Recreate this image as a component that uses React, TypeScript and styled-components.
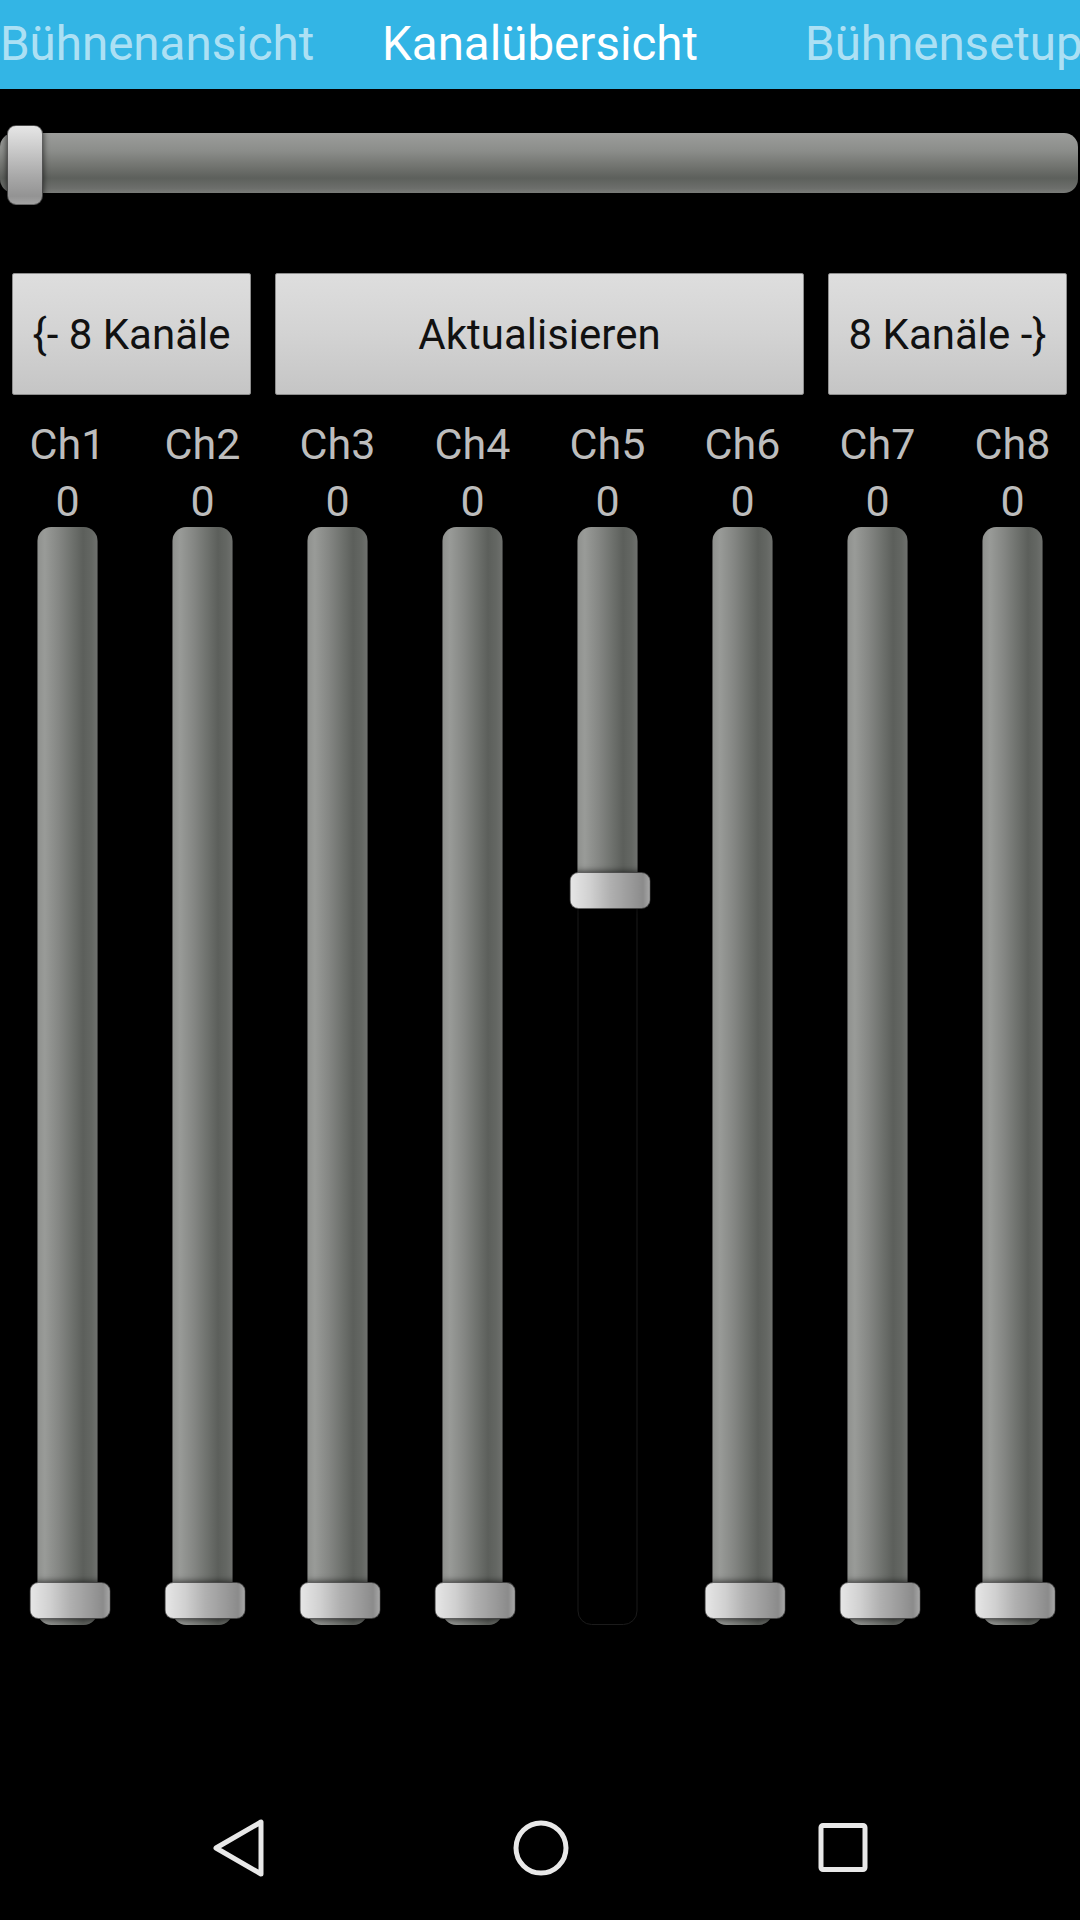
import React from "react";
import styled, { createGlobalStyle } from "styled-components";

const Global = createGlobalStyle`
  html, body { margin: 0; padding: 0; background: #000; }
  body { font-family: Roboto, "Noto Sans", "Liberation Sans", sans-serif; }
  * { box-sizing: border-box; }
`;

const Screen = styled.div`
  width: 1080px;
  height: 1920px;
  background: #000;
  display: flex;
  flex-direction: column;
  overflow: hidden;
`;

const TitleStrip = styled.div`
  height: 89px;
  background: #33b5e5;
  display: flex;
  align-items: center;
  overflow: hidden;
  flex: none;
`;

const Side = styled.div`
  flex: 1 1 0;
  min-width: 0;
  overflow: hidden;
  white-space: nowrap;
`;

const Title = styled.span<{ $active?: boolean; $indent?: number }>`
  display: inline-block;
  font-size: 47.5px;
  line-height: 89px;
  white-space: nowrap;
  padding-left: ${(p) => p.$indent ?? 0}px;
  color: ${(p) => (p.$active ? "#ffffff" : "rgba(255,255,255,0.62)")};
`;

const Center = styled.div`
  flex: none;
`;

const SeekArea = styled.div`
  padding: 44px 2px 0 0;
  flex: none;
`;

const HTrack = styled.div`
  position: relative;
  height: 60px;
  border-radius: 14px;
  background: linear-gradient(
    to bottom,
    #9c9d9b 0%,
    #8b8d8a 30%,
    #727470 55%,
    #5d605c 75%,
    #6c6e6b 92%,
    #7a7c79 100%
  );
`;

const HThumb = styled.div`
  position: absolute;
  left: 7px;
  top: -8px;
  width: 36px;
  height: 80px;
  border-radius: 9px;
  border: 1px solid rgba(0, 0, 0, 0.55);
  background: linear-gradient(
    to bottom,
    #e6e6e6 0%,
    #cfcfcf 25%,
    #a8a8a8 65%,
    #939393 90%,
    #a3a3a3 100%
  );
  box-shadow: 0 0 6px rgba(0, 0, 0, 0.7);
`;

const ButtonRow = styled.div`
  margin-top: 80px;
  padding: 0 13px 0 12px;
  display: grid;
  grid-template-columns: 239px 1fr 239px;
  column-gap: 24px;
  flex: none;
`;

const Button = styled.button`
  height: 122px;
  margin: 0;
  padding: 0;
  border: 1px solid #8e8e8e;
  border-radius: 2px;
  background: linear-gradient(to bottom, #dedede 0%, #d3d3d3 50%, #c5c5c5 100%);
  font-family: Roboto, "Noto Sans", "Liberation Sans", sans-serif;
  font-size: 42px;
  color: #111;
  display: flex;
  align-items: center;
  justify-content: center;
`;

const Channels = styled.div`
  margin-top: 21px;
  display: grid;
  grid-template-columns: repeat(8, 135px);
  flex: none;
`;

const Column = styled.div`
  display: flex;
  flex-direction: column;
  align-items: center;
`;

const ChLabel = styled.div`
  font-size: 43px;
  line-height: 57px;
  color: #bdbdbd;
`;

const ChValue = styled.div`
  margin-top: 5px;
  font-size: 43px;
  line-height: 47px;
  color: #bdbdbd;
`;

const VTrack = styled.div`
  position: relative;
  margin-top: 2px;
  width: 60px;
  height: 1098px;
  border-radius: 14px;
  border: 1px solid #1b1b1b;
  background: #000;
  transform: translateX(-0.5px);
`;

const VFill = styled.div`
  position: absolute;
  left: -1px;
  right: -1px;
  top: -1px;
  border-radius: 14px 14px 0 0;
  background: linear-gradient(
    to right,
    #8f918e 0%,
    #999b98 12%,
    #858784 35%,
    #6e716d 58%,
    #5c5f5b 76%,
    #646763 90%,
    #6f716e 100%
  );
`;

const VFillFull = styled(VFill)`
  bottom: -1px;
  border-radius: 14px;
`;

const VThumb = styled.div`
  position: absolute;
  left: -9px;
  width: 81px;
  height: 37px;
  border-radius: 9px;
  border: 1px solid rgba(0, 0, 0, 0.55);
  background: linear-gradient(
    to right,
    #e6e6e6 0%,
    #d0d0d0 25%,
    #b0b0b0 50%,
    #969696 80%,
    #8b8b8b 92%,
    #a6a6a6 100%
  );
  box-shadow: 0 0 7px rgba(0, 0, 0, 0.75);
`;

const NavBar = styled.div`
  margin-top: auto;
  height: 144px;
  flex: none;
  display: flex;
  align-items: center;
  justify-content: center;
  gap: 222px;
  padding-left: 2px;
`;

const NavIcon = styled.svg`
  width: 80px;
  height: 80px;
  display: block;
`;

const THUMB_RANGE = 1055;

const channels = [
  { name: "Ch1", value: 0, pos: 0 },
  { name: "Ch2", value: 0, pos: 0 },
  { name: "Ch3", value: 0, pos: 0 },
  { name: "Ch4", value: 0, pos: 0 },
  { name: "Ch5", value: 0, pos: 0.673 },
  { name: "Ch6", value: 0, pos: 0 },
  { name: "Ch7", value: 0, pos: 0 },
  { name: "Ch8", value: 0, pos: 0 },
];

function Fader({ pos }: { pos: number }) {
  const top = Math.round((1 - pos) * THUMB_RANGE);
  return (
    <VTrack>
      {pos === 0 ? <VFillFull /> : <VFill style={{ height: top + 18 }} />}
      <VThumb style={{ top: top - 1 }} />
    </VTrack>
  );
}

export default function App() {
  return (
    <>
      <Global />
      <Screen>
        <TitleStrip>
          <Side>
            <Title>Bühnenansicht</Title>
          </Side>
          <Center>
            <Title $active>Kanalübersicht</Title>
          </Center>
          <Side>
            <Title $indent={107}>Bühnensetup</Title>
          </Side>
        </TitleStrip>

        <SeekArea>
          <HTrack>
            <HThumb />
          </HTrack>
        </SeekArea>

        <ButtonRow>
          <Button>{"{- 8 Kanäle"}</Button>
          <Button>Aktualisieren</Button>
          <Button>{"8 Kanäle -}"}</Button>
        </ButtonRow>

        <Channels>
          {channels.map((c) => (
            <Column key={c.name}>
              <ChLabel>{c.name}</ChLabel>
              <ChValue>{c.value}</ChValue>
              <Fader pos={c.pos} />
            </Column>
          ))}
        </Channels>

        <NavBar>
          <NavIcon viewBox="0 0 80 80">
            <path
              d="M17 40 L62 14 L62 66 Z"
              fill="none"
              stroke="#e8e8e8"
              strokeWidth="5"
              strokeLinejoin="round"
            />
          </NavIcon>
          <NavIcon viewBox="0 0 80 80">
            <circle cx="40" cy="40" r="25" fill="none" stroke="#e8e8e8" strokeWidth="5" />
          </NavIcon>
          <NavIcon viewBox="0 0 80 80">
            <rect
              x="18"
              y="17.5"
              width="44"
              height="44"
              rx="2"
              fill="none"
              stroke="#e8e8e8"
              strokeWidth="5"
            />
          </NavIcon>
        </NavBar>
      </Screen>
    </>
  );
}
